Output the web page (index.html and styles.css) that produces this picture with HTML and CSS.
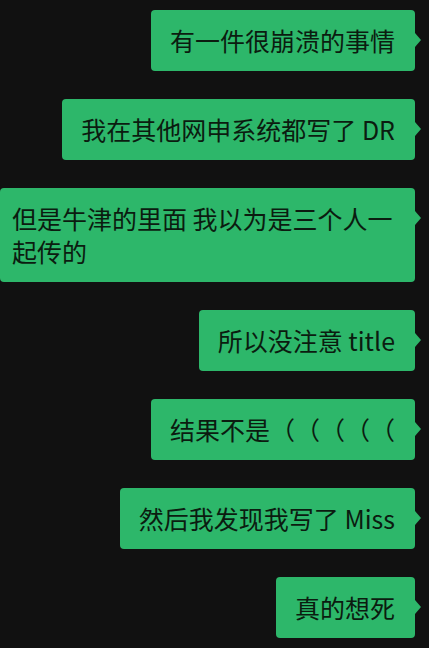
FILE: index.html
```html
<!DOCTYPE html>
<html lang="zh">
<head>
<meta charset="utf-8">
<link rel="stylesheet" href="styles.css">
</head>
<body>
<div class="chat">
  <div class="msg"><div class="bubble">有一件很崩溃的事情</div></div>
  <div class="msg"><div class="bubble">我在其他网申系统都写了 DR</div></div>
  <div class="msg"><div class="bubble wide">但是牛津的里面 我以为是三个人一起传的</div></div>
  <div class="msg"><div class="bubble">所以没注意 title</div></div>
  <div class="msg"><div class="bubble">结果不是（（（（（</div></div>
  <div class="msg"><div class="bubble">然后我发现我写了 Miss</div></div>
  <div class="msg"><div class="bubble">真的想死</div></div>
</div>
</body>
</html>
```
FILE: styles.css
```css
html, body {
  margin: 0;
  padding: 0;
  background: #111111;
  overflow: hidden;
}
.chat {
  width: 429px;
  height: 648px;
  box-sizing: border-box;
  padding: 10px 14px 0 0;
  display: flex;
  flex-direction: column;
  gap: 28px;
}
.msg {
  display: flex;
  justify-content: flex-end;
}
.bubble {
  position: relative;
  flex-shrink: 0;
  max-width: 450px;
  box-sizing: border-box;
  background: #2db76a;
  color: #0b1c10;
  border-radius: 4px;
  padding: 14px 20px 14px 19px;
  font-family: "Noto Sans CJK SC", "Noto Sans", sans-serif;
  font-size: 25px;
  line-height: 33px;
  text-spacing-trim: space-all;
}
.bubble::after {
  content: "";
  position: absolute;
  right: -6px;
  top: 23px;
  border-left: 6px solid #2db76a;
  border-top: 7px solid transparent;
  border-bottom: 7px solid transparent;
}
.wide {
  max-width: 415px;
  padding-left: 12px;
  padding-right: 20px;
}
```
